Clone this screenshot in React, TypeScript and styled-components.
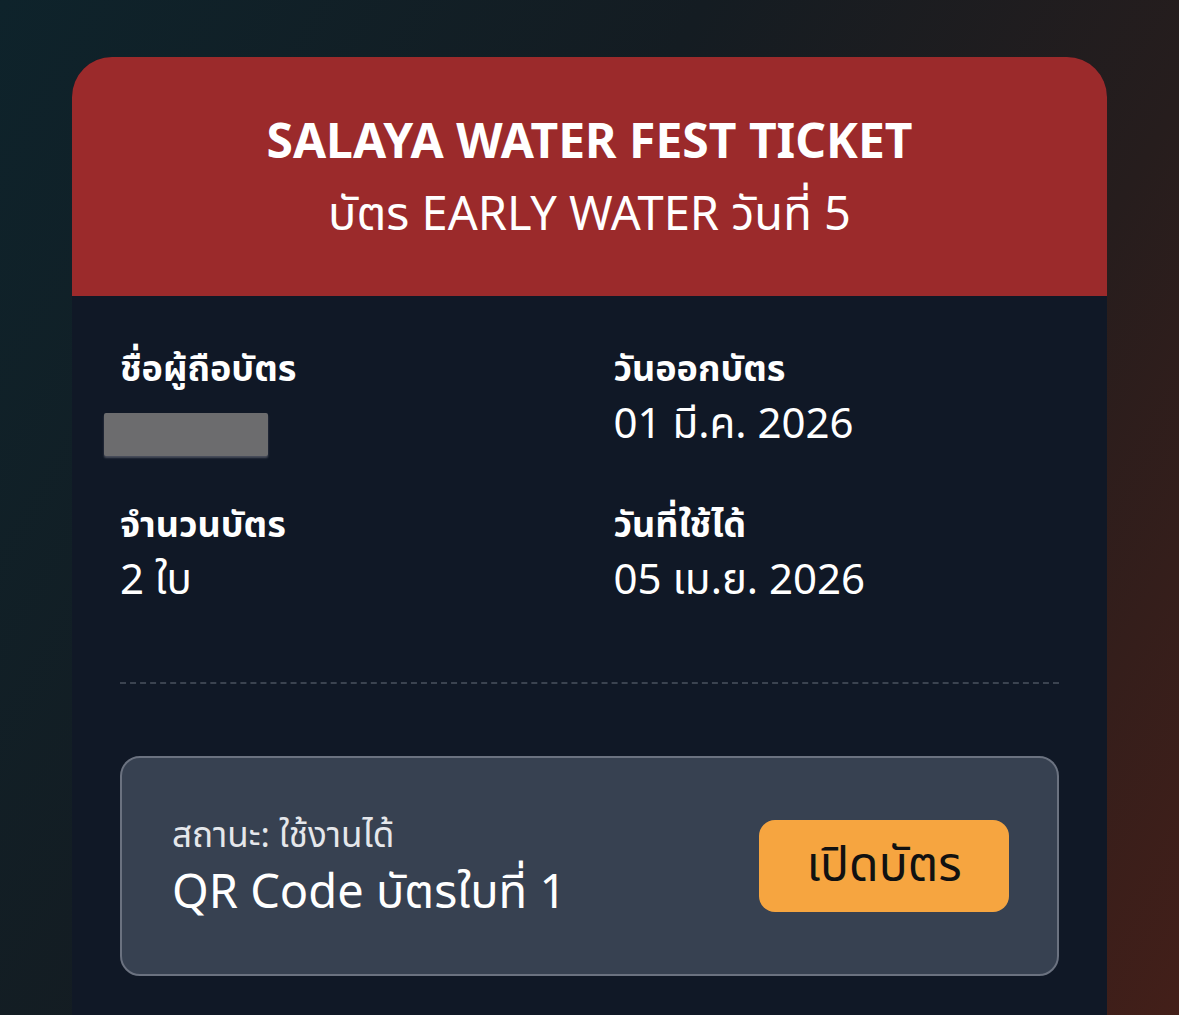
import React from "react";
import styled, { createGlobalStyle } from "styled-components";

const Global = createGlobalStyle`
  html, body { margin: 0; padding: 0; }
  body {
    font-family: "Noto Sans", "Noto Sans Thai", "DejaVu Sans", sans-serif;
    background: #101a20;
  }
`;

const Page = styled.div`
  width: 1179px;
  height: 1015px;
  overflow: hidden;
  box-sizing: border-box;
  padding: 57px 72px 0 72px;
  background: linear-gradient(120deg, #0e232b 0%, #141c22 40%, #261d1d 70%, #431f19 100%);
`;

const Card = styled.div`
  border-radius: 40px 40px 0 0;
  overflow: hidden;
  background: #101826;
  height: 1000px;
`;

const Header = styled.div`
  background: #9b2a2b;
  height: 239px;
  display: flex;
  flex-direction: column;
  align-items: center;
  justify-content: center;
  gap: 9px;
  color: #fff;
  padding-bottom: 2px;
  box-sizing: border-box;
`;

const Title = styled.div`
  font-size: 48px;
  font-weight: 700;
  line-height: 64px;
`;

const Subtitle = styled.div`
  font-size: 47px;
  font-weight: 400;
  line-height: 62px;
`;

const Body = styled.div`
  padding: 48px 48px;
`;

const Grid = styled.div`
  display: grid;
  grid-template-columns: 1fr 1fr;
  column-gap: 48px;
  row-gap: 44px;
`;

const Field = styled.div`
  display: flex;
  flex-direction: column;
`;

const Label = styled.div`
  font-size: 36px;
  font-weight: 700;
  line-height: 48px;
  color: #fff;
`;

const Value = styled.div`
  font-size: 42px;
  line-height: 60px;
  color: #fff;
`;

const Redacted = styled.div`
  width: 164px;
  height: 43px;
  margin: 21px 0 0 -16px;
  background: #6c6c6e;
  border-radius: 2px;
  box-shadow: 0 2px 2px #4a4f5c;
`;

const Divider = styled.div`
  margin-top: 74px;
  height: 0;
  border-top: 2px dashed #3b4350;
`;

const StatusBox = styled.div`
  margin-top: 72px;
  background: #374151;
  border: 2px solid #6b7280;
  border-radius: 20px;
  height: 220px;
  box-sizing: border-box;
  padding: 0 48px 0 50px;
  display: flex;
  align-items: center;
  justify-content: space-between;
`;

const StatusText = styled.div`
  display: flex;
  flex-direction: column;
`;

const StatusLabel = styled.div`
  font-size: 35px;
  line-height: 48px;
  color: #e5e7eb;
`;

const StatusTitle = styled.div`
  font-size: 47px;
  line-height: 64px;
  color: #fff;
`;

const OpenButton = styled.button`
  width: 250px;
  height: 92px;
  border: none;
  border-radius: 16px;
  background: #f6a540;
  color: #111;
  font-family: inherit;
  font-size: 48px;
  cursor: pointer;
  padding: 0;
`;

export default function App() {
  return (
    <>
      <Global />
      <Page>
        <Card>
          <Header>
            <Title>SALAYA WATER FEST TICKET</Title>
            <Subtitle>บัตร EARLY WATER วันที่ 5</Subtitle>
          </Header>
          <Body>
            <Grid>
              <Field>
                <Label>ชื่อผู้ถือบัตร</Label>
                <Redacted />
              </Field>
              <Field>
                <Label>วันออกบัตร</Label>
                <Value>01 มี.ค. 2026</Value>
              </Field>
              <Field>
                <Label>จำนวนบัตร</Label>
                <Value>2 ใบ</Value>
              </Field>
              <Field>
                <Label>วันที่ใช้ได้</Label>
                <Value>05 เม.ย. 2026</Value>
              </Field>
            </Grid>
            <Divider />
            <StatusBox>
              <StatusText>
                <StatusLabel>สถานะ: ใช้งานได้</StatusLabel>
                <StatusTitle>QR Code บัตรใบที่ 1</StatusTitle>
              </StatusText>
              <OpenButton>เปิดบัตร</OpenButton>
            </StatusBox>
          </Body>
        </Card>
      </Page>
    </>
  );
}
